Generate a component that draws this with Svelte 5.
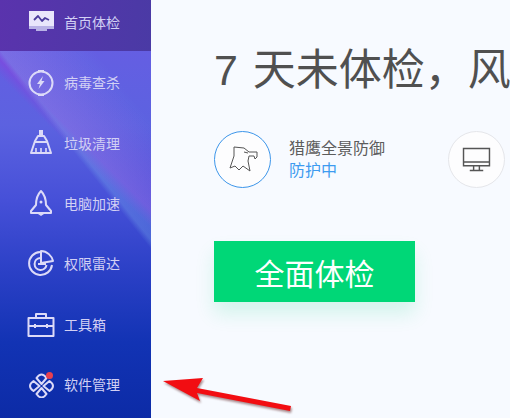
<script>
  const navItems = [
    { label: "首页体检", icon: "monitor", active: true },
    { label: "病毒查杀", icon: "bolt" },
    { label: "垃圾清理", icon: "broom" },
    { label: "电脑加速", icon: "rocket" },
    { label: "权限雷达", icon: "radar" },
    { label: "工具箱", icon: "toolbox" },
    { label: "软件管理", icon: "apps" },
  ];
</script>

<div class="window">
  <nav class="sidebar">
    {#each navItems as item}
      <div class="nav-item" class:active={item.active}>
        <svg class="nav-icon" viewBox="0 0 28 28" width="28" height="28" fill="none" stroke="#dcdaf8" stroke-width="1.6" stroke-linejoin="round">
          {#if item.icon === "monitor"}
            <path fill="#e9e6fb" stroke="none" d="M2 3h25v15H2z" />
            <path fill="#b9b2e6" stroke="none" d="M2 18h25v3H2zM9 21h11v2H9z" />
            <path stroke="#4a3a9c" stroke-width="1.8" d="M7 12l4-4 4 5 3-3 4 2" />
          {:else if item.icon === "bolt"}
            <circle cx="14" cy="15" r="11.5" stroke-width="2" />
            <path d="M11 3h6M11 27h6" stroke-width="2" />
            <path fill="#dcdaf8" stroke="none" d="M16 8l-6 8h3l-1.500 5 6-8h-3z" />
          {:else if item.icon === "broom"}
            <path fill="#dcdaf8" stroke="none" d="M12 1h4v5h-4z" />
            <path stroke-width="2" d="M11 7h6l3 5 4 12H4l4-12zM8 13h12" />
            <path d="M9 19v5M14 19v5M19 19v5" />
          {:else if item.icon === "rocket"}
            <path stroke-width="2" d="M14 2c-4 4-5 9-5 14l-5 6v2h20v-2l-5-6c0-5-1-10-5-14z" />
            <circle cx="14" cy="13" r="1.500" fill="#dcdaf8" stroke="none" />
            <path fill="#dcdaf8" stroke="none" d="M11 25h6l-3 2z" />
          {:else if item.icon === "radar"}
            <path stroke-width="2" d="M13 3a11.500 11.500 0 1 0 12 13" />
            <path stroke-width="2" d="M13 9a6 6 0 1 0 6.500 7" />
            <path stroke-width="2" d="M14 14V2c6 0 11 5 12 10z" />
            <path stroke-width="2" d="M11 15h8" />
          {:else if item.icon === "toolbox"}
            <g transform="translate(0 1)">
              <path stroke-width="2" d="M1.500 7h25v18h-25zM9 7V3h10v4M1.500 15h25" />
              <path fill="#dcdaf8" stroke="none" d="M7 13h2v4H7zM19 13h2v4h-2z" />
            </g>
          {:else}
            <g transform="translate(0.500 2)">
              <path stroke-width="2" d="M14 12L9 6Q14-1 19 6zM12 14L6 9Q-1 14 6 19zM16 14L22 9Q29 14 22 19zM14 16L9 22Q14 29 19 22z" />
            </g>
            <circle cx="22.500" cy="5.500" r="3.500" fill="#e8404f" stroke="none" />
          {/if}
        </svg>
        <span>{item.label}</span>
      </div>
    {/each}
  </nav>

  <main class="content">
    <h1>7 天未体检，风</h1>

    <div class="status-row">
      <div class="status">
        <div class="badge on">
          <svg viewBox="0 0 30 28" width="30" height="28" fill="none" stroke="#555" stroke-width="1" stroke-linejoin="round">
            <path d="M6 1L16 2L21 6L29 6L29 11L27 13L26 10L21 10L20 15L22 25L15 20L11 24L7 20L2 22L6 10z" />
            <path d="M16 6l4 1" />
          </svg>
        </div>
        <div class="status-text">
          <div class="status-title">猎鹰全景防御</div>
          <div class="status-state">防护中</div>
        </div>
      </div>
      <div class="badge">
        <svg viewBox="0 0 30 26" width="29" height="25" fill="none" stroke="#555" stroke-width="1.500">
          <path d="M1.500 1.500h27v18h-27zM1.500 15.500h27M12 20v4M18 20v4M8 24.500h14" />
        </svg>
      </div>
    </div>

    <button class="scan">全面体检</button>
  </main>

  <svg class="arrow" viewBox="0 0 140 40" width="140" height="40">
    <path fill="#f20d12" d="M3 7l40-3-6 10 94 18-1 5-93-18 3 8z" />
  </svg>
</div>

<style>
  :global(body) {
    margin: 0;
  }

  .window {
    position: relative;
    display: flex;
    width: 510px;
    height: 418px;
    overflow: hidden;
    background: #f7faff;
    font-family: "Liberation Sans", "Noto Sans CJK SC", sans-serif;
  }

  .sidebar {
    display: flex;
    flex-direction: column;
    flex: none;
    width: 151px;
    height: 418px;
    padding-bottom: 3px;
    box-sizing: border-box;
    background:
      linear-gradient(51.500deg, rgba(130, 190, 240, 0) 59%, rgba(130, 190, 240, 0.28) 60.500%, rgba(130, 190, 240, 0) 80%),
      linear-gradient(45deg, rgba(60, 70, 220, 0) 60%, rgba(140, 60, 220, 0.5) 63%, rgba(140, 60, 220, 0) 78%),
      linear-gradient(180deg, #6a5ce4 0%, #5c62e0 30%, #4650d8 48%, #2b40c6 65%, #1233b4 82%, #0c2ba6 100%);
  }

  .nav-item {
    display: flex;
    align-items: center;
    gap: 9px;
    height: 60.400px;
    padding-left: 27px;
    color: #d2d0f4;
    font-size: 14px;
    white-space: nowrap;
  }

  .nav-item.active {
    height: 51px;
    margin-bottom: 1px;
    padding-bottom: 8px;
    box-sizing: border-box;
    background: linear-gradient(100deg, #5a33ad, #4a3aa5);
  }

  .nav-icon {
    flex: none;
  }

  .content {
    flex: 1;
    min-width: 0;
    padding: 43px 0 0 63px;
  }

  h1 {
    margin: 0;
    color: #505050;
    font-size: 43px;
    font-weight: 400;
    line-height: 54px;
    word-spacing: 3px;
    white-space: nowrap;
  }

  .status-row {
    display: flex;
    align-items: center;
    gap: 63px;
    margin-top: 34px;
  }

  .status {
    display: flex;
    align-items: center;
    gap: 18px;
  }

  .badge {
    display: flex;
    align-items: center;
    justify-content: center;
    flex: none;
    width: 57px;
    height: 57px;
    box-sizing: border-box;
    border: 1px solid #e5e6ea;
    border-radius: 50%;
    background: #fdfdfe;
  }

  .badge.on {
    border-color: #3d96ea;
  }

  .status-text {
    font-size: 16px;
    line-height: 22px;
  }

  .status-title {
    color: #5c5c5c;
  }

  .status-state {
    color: #3d9bf0;
  }

  .scan {
    display: block;
    width: 201px;
    height: 61px;
    margin-top: 53px;
    border: 0;
    background: #00d777;
    box-shadow: 0 12px 18px rgba(0, 215, 120, 0.14);
    color: #fff;
    font-family: inherit;
    font-size: 30px;
  }

  .arrow {
    position: absolute;
    left: 160px;
    top: 374px;
    filter: drop-shadow(1px 2px 1px rgba(70, 0, 0, 0.45));
  }
</style>
